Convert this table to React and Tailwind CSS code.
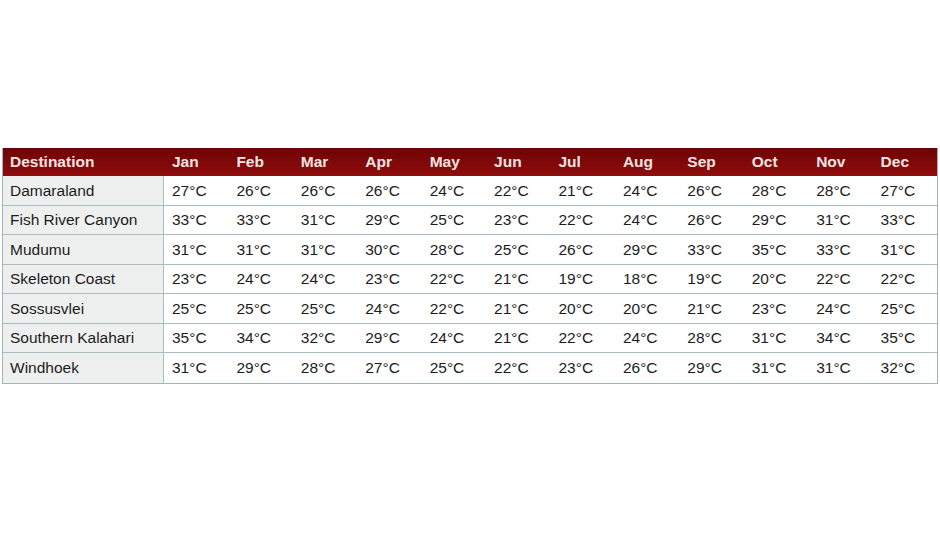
import React from "react";

const months = ["Jan", "Feb", "Mar", "Apr", "May", "Jun", "Jul", "Aug", "Sep", "Oct", "Nov", "Dec"];

const rows = [
  { name: "Damaraland", temps: [27, 26, 26, 26, 24, 22, 21, 24, 26, 28, 28, 27] },
  { name: "Fish River Canyon", temps: [33, 33, 31, 29, 25, 23, 22, 24, 26, 29, 31, 33] },
  { name: "Mudumu", temps: [31, 31, 31, 30, 28, 25, 26, 29, 33, 35, 33, 31] },
  { name: "Skeleton Coast", temps: [23, 24, 24, 23, 22, 21, 19, 18, 19, 20, 22, 22] },
  { name: "Sossusvlei", temps: [25, 25, 25, 24, 22, 21, 20, 20, 21, 23, 24, 25] },
  { name: "Southern Kalahari", temps: [35, 34, 32, 29, 24, 21, 22, 24, 28, 31, 34, 35] },
  { name: "Windhoek", temps: [31, 29, 28, 27, 25, 22, 23, 26, 29, 31, 31, 32] },
];

const App = () => {
  return (
    <div
      className="h-[534px] w-[940px] bg-white px-[2px] pt-[148px]"
      style={{ fontFamily: '"Liberation Sans", Arial, sans-serif' }}
    >
      <div className="w-full border-x border-b border-[#9fb5b8] text-[15.5px] text-[#1c1c1c]">
        <div className="grid h-[28px] grid-cols-[161px_repeat(12,1fr)] items-center bg-gradient-to-b from-[#6e0404] to-[#900d0d] font-bold text-[#f8e4e2]">
          <div className="pl-[7px]">Destination</div>
          {months.map((m) => (
            <div key={m} className="pl-[8px]">
              {m}
            </div>
          ))}
        </div>
        {rows.map((row, i) => (
          <div
            key={row.name}
            className={`grid h-[29.5px] grid-cols-[161px_repeat(12,1fr)] items-center ${
              i < rows.length - 1 ? "border-b border-[#a9bcbe]" : ""
            }`}
          >
            <div className="flex h-full items-center border-r border-[#a9bcbe] bg-[#eef0f0] pl-[7px]">
              {row.name}
            </div>
            {row.temps.map((t, j) => (
              <div key={j} className="pl-[8px]">
                {t}°C
              </div>
            ))}
          </div>
        ))}
      </div>
    </div>
  );
};

export default App;
